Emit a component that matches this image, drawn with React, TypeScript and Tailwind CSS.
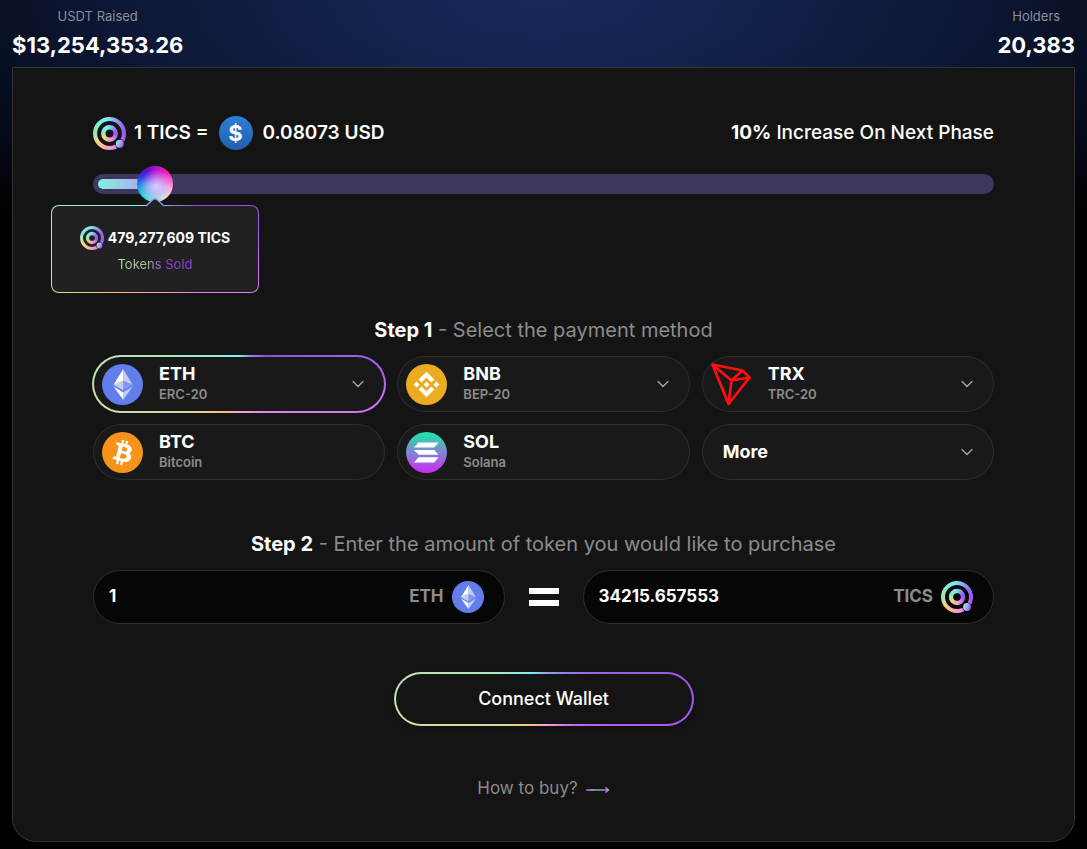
import { useId, useState } from "react";
import type { ReactNode } from "react";
import { ChevronDown } from "lucide-react";

const rainbow =
  "bg-[conic-gradient(#90e8f0_0deg,#9a8cf5_20deg,#8a50e0_45deg,#a45cf0_80deg,#c878f0_100deg,#d888ec_130deg,#f09cd8_165deg,#f8c088_215deg,#d8d8a0_245deg,#b8e4b8_280deg,#98ecd0_310deg,#7ef0f0_345deg,#90e8f0_360deg)]";

function TicsIcon({ className }: { className: string }) {
  const id = useId();
  const mask = `${id}-mask`;
  return (
    <svg viewBox="0 0 32 32" className={className} aria-hidden>
      <mask id={mask}>
        <circle cx="16" cy="16" r="14" fill="none" stroke="#fff" strokeWidth="4" />
        <circle cx="16" cy="16" r="6" fill="none" stroke="#fff" strokeWidth="4.4" />
        <circle cx="26" cy="26" r="4.6" fill="#000" />
      </mask>
      <foreignObject width="32" height="32" mask={`url(#${mask})`}>
        <div className="size-8 bg-[conic-gradient(#80d8f8_0deg,#9098f8_30deg,#9060f0_70deg,#a858f8_100deg,#c880f0_135deg,#f898d8_175deg,#fcc088_215deg,#e8d890_240deg,#a8e0b0_270deg,#78f0d8_310deg,#78f0f0_340deg,#80d8f8_360deg)]" />
      </foreignObject>
      <linearGradient id={id} x1="0" y1="0.3" x2="1" y2="0.7">
        <stop offset="0.1" stopColor="#7ee8e0" />
        <stop offset="0.45" stopColor="#a8b0f0" />
        <stop offset="0.9" stopColor="#b048f0" />
      </linearGradient>
      <circle cx="26" cy="26" r="3.9" fill={`url(#${id})`} />
    </svg>
  );
}

function EthIcon({ className }: { className: string }) {
  return (
    <svg viewBox="0 0 32 32" className={className} aria-hidden>
      <circle cx="16" cy="16" r="16" fill="#627eea" />
      <g fill="#fff">
        <path fillOpacity=".602" d="M16.498 4v8.87l7.497 3.35z" />
        <path d="M16.498 4L9 16.22l7.498-3.35z" />
        <path fillOpacity=".602" d="M16.498 21.968v6.027L24 17.616z" />
        <path d="M16.498 27.995v-6.028L9 17.616z" />
        <path fillOpacity=".2" d="M16.498 20.573l7.497-4.353-7.497-3.348z" />
        <path fillOpacity=".602" d="M9 16.22l7.498 4.353v-7.701z" />
      </g>
    </svg>
  );
}

function BtcIcon({ className }: { className: string }) {
  return (
    <svg viewBox="0 0 32 32" className={className} aria-hidden>
      <circle cx="16" cy="16" r="16" fill="#f7931a" />
      <path
        fill="#fff"
        d="M23.189 14.02c.314-2.096-1.283-3.223-3.465-3.975l.708-2.84-1.728-.43-.69 2.765c-.454-.114-.92-.22-1.385-.326l.695-2.783L15.596 6l-.708 2.839c-.376-.086-.746-.17-1.104-.26l.002-.009-2.384-.595-.46 1.846s1.283.294 1.256.312c.7.175.826.638.805 1.006l-.806 3.235c.048.012.11.03.18.057l-.183-.045-1.13 4.532c-.086.212-.303.531-.793.41.018.025-1.256-.313-1.256-.313l-.858 1.978 2.25.561c.418.105.828.215 1.231.318l-.715 2.872 1.727.43.708-2.84c.472.127.93.245 1.378.357l-.706 2.828 1.728.43.715-2.866c2.948.558 5.164.333 6.097-2.333.752-2.146-.037-3.385-1.588-4.192 1.13-.26 1.98-1.003 2.207-2.538zm-3.95 5.538c-.533 2.147-4.148.986-5.32.695l.95-3.805c1.172.293 4.929.872 4.37 3.11zm.535-5.569c-.487 1.953-3.495.96-4.47.717l.86-3.45c.975.243 4.118.696 3.61 2.733z"
      />
    </svg>
  );
}

function BnbIcon({ className }: { className: string }) {
  return (
    <svg viewBox="0 0 32 32" className={className} aria-hidden>
      <circle cx="16" cy="16" r="16" fill="#ebac22" />
      <path
        fill="#fff"
        d="M12.116 14.404L16 10.52l3.886 3.886 2.26-2.26L16 6l-6.144 6.144 2.26 2.26zM6 16l2.26-2.26L10.52 16l-2.26 2.26L6 16zm6.116 1.596L16 21.48l3.886-3.886 2.26 2.259L16 26l-6.144-6.144-.003-.003 2.263-2.257zM21.48 16l2.26-2.26L26 16l-2.26 2.26L21.48 16zm-3.188-.002L16 18.294 13.705 16 16 13.706z"
      />
    </svg>
  );
}

function SolIcon({ className }: { className: string }) {
  const id = useId();
  return (
    <svg viewBox="0 0 32 32" className={className} aria-hidden>
      <linearGradient id={id} x1="0" y1="0" x2="0" y2="1">
        <stop offset="0.05" stopColor="#22e2aa" />
        <stop offset="0.5" stopColor="#8085d0" />
        <stop offset="0.95" stopColor="#c832f4" />
      </linearGradient>
      <circle cx="16" cy="16" r="16" fill={`url(#${id})`} />
      <path fill="#fff" d="M9.8 8.2H25.4L22 12H6.2zM6.2 14H22L25.4 17.800H9.800zM9.800 19.800H25.400L22 23.800H6.200z" />
    </svg>
  );
}

function TrxIcon({ className }: { className: string }) {
  return (
    <svg viewBox="0 0 41 43" className={className} aria-hidden>
      <g fill="none" stroke="#ff0f0f" strokeWidth="2.7" strokeLinejoin="round">
        <path d="M1.500 1.500L31.500 7.500L38.500 14.500L17.500 41z" />
        <path d="M1.500 1.500L20.500 17.500L38.500 14.500M20.500 17.500L17.500 41M20.500 17.500L31.500 7.500" />
      </g>
    </svg>
  );
}

function ArrowIcon() {
  const id = useId();
  return (
    <svg viewBox="0 0 24 10" className="mt-1 h-2.5 w-6" aria-hidden>
      <linearGradient id={id} gradientUnits="userSpaceOnUse" x1="0" y1="0" x2="24" y2="0">
        <stop offset="0" stopColor="#a855f7" />
        <stop offset="0.25" stopColor="#f0a0c0" />
        <stop offset="0.4" stopColor="#70b8b0" />
        <stop offset="0.65" stopColor="#a8a880" />
        <stop offset="0.8" stopColor="#a060f0" />
        <stop offset="1" stopColor="#e0a0ff" />
      </linearGradient>
      <path d="M0 4.200h19.500V1.500L23.500 5l-4 3.500V5.800H0z" fill={`url(#${id})`} />
    </svg>
  );
}

type Method = {
  name: string;
  network?: string;
  icon?: ReactNode;
  hasMenu?: boolean;
};

const methods: Method[] = [
  { name: "ETH", network: "ERC-20", icon: <EthIcon className="size-[41px]" />, hasMenu: true },
  { name: "BNB", network: "BEP-20", icon: <BnbIcon className="size-[41px]" />, hasMenu: true },
  { name: "TRX", network: "TRC-20", icon: <TrxIcon className="h-[43px] w-[41px]" />, hasMenu: true },
  { name: "BTC", network: "Bitcoin", icon: <BtcIcon className="size-[41px]" /> },
  { name: "SOL", network: "Solana", icon: <SolIcon className="size-[41px]" /> },
  { name: "More", hasMenu: true },
];

function MethodButton({ method, active, onSelect }: { method: Method; active: boolean; onSelect: () => void }) {
  return (
    <button
      type="button"
      aria-pressed={active}
      onClick={onSelect}
      className={`rounded-full text-left ${active ? `${rainbow} -m-px h-[58px] p-0.5` : "h-14 bg-[#2e2e2e] p-px"}`}
    >
      <span className="flex h-full items-center rounded-full bg-[#191919] pr-4 pl-2">
        {method.icon}
        <span className={`flex flex-1 flex-col ${method.icon ? "ml-4" : "ml-3"}`}>
          <span className="text-lg leading-5 font-bold text-white">{method.name}</span>
          {method.network && <span className="text-[13px] leading-5 font-semibold text-[#8c8c8c]">{method.network}</span>}
        </span>
        {method.hasMenu && <ChevronDown className="size-5 text-[#a8a8a8]" strokeWidth={1.5} aria-hidden />}
      </span>
    </button>
  );
}

function AmountField({ label, unit, icon, defaultValue }: { label: string; unit: string; icon: ReactNode; defaultValue: string }) {
  return (
    <label className="flex h-[54px] min-w-0 flex-1 items-center gap-2 rounded-full border border-[#2e2e2e] bg-[#060606] pr-5 pl-[15px]">
      <input
        aria-label={label}
        defaultValue={defaultValue}
        inputMode="decimal"
        className="min-w-0 flex-1 bg-transparent text-[17px] font-bold text-white outline-none"
      />
      <span className="text-[17px] font-bold text-[#8c8c8c]">{unit}</span>
      {icon}
    </label>
  );
}

function SaleProgress() {
  const [sold, setSold] = useState(5.08);
  return (
    <div className="relative mt-4 flex h-9 items-center">
      <div className="h-5 w-full rounded-full bg-[#3f375c] p-[5px]">
        <div
          className="h-2.5 min-w-5 rounded-full bg-linear-to-r from-[#7ff0e0] to-[#b09cf0]"
          style={{ width: `${sold + 1}%` }}
        />
      </div>
      <input
        type="range"
        aria-label="Tokens sold"
        min={0}
        max={100}
        step="any"
        value={sold}
        onChange={(e) => setSold(Number(e.target.value))}
        className="absolute inset-0 h-9 w-full appearance-none bg-transparent [&::-webkit-slider-thumb]:size-9 [&::-webkit-slider-thumb]:appearance-none [&::-webkit-slider-thumb]:rounded-full [&::-webkit-slider-thumb]:bg-[radial-gradient(circle_at_52%_58%,#d8c8ff_0%,#c8b0ffcc_25%,transparent_62%),conic-gradient(#b010c8_0deg,#f020c0_45deg,#ff60c8_80deg,#f8c8d0_115deg,#d8f8c8_150deg,#70f0c8_185deg,#18d8e0_225deg,#1090e8_265deg,#3030d8_300deg,#6010d0_330deg,#b010c8_360deg)]"
      />
      <div className={`absolute top-[39px] -left-[42px] w-52 rounded-lg p-px ${rainbow}`}>
        <svg viewBox="0 0 20 9" className="absolute -top-[7px] left-[94px] h-[9px] w-5" aria-hidden>
          <path d="M1 8L8 1.500Q10 0 12 1.500L19 8V9H1z" fill="#212121" />
          <path d="M1 8L8 1.500Q10 0 12 1.500L19 8" fill="none" stroke="#8f9cea" strokeWidth="1.400" />
        </svg>
        <div className="flex h-[86px] flex-col items-center gap-1.5 rounded-[7px] bg-[#212121] pt-5">
          <div className="flex items-center gap-1">
            <TicsIcon className="size-6" />
            <span className="text-sm font-bold text-white">479,277,609 TICS</span>
          </div>
          <span className="bg-linear-to-r from-[#b0e0b0] via-[#a8b898] via-40% to-[#9040e0] to-60% bg-clip-text text-[13px] leading-4 text-transparent">
            Tokens Sold
          </span>
        </div>
      </div>
    </div>
  );
}

export default function App() {
  const [selected, setSelected] = useState("ETH");

  return (
    <div className="min-h-screen bg-black bg-[radial-gradient(ellipse_62%_260px_at_50%_0,#17285a_0%,#13224c_30%,#0e1938_60%,#080f22_85%,#000_115%)] bg-no-repeat px-3 pb-[7px] font-[Inter,sans-serif]">
      <header className="flex h-[67px] justify-between pt-1.5 text-center">
        <div>
          <p className="text-[13px] leading-5 text-[#8b8e98]">USDT Raised</p>
          <p className="mt-[3px] text-[22px] leading-8 font-bold text-white">$13,254,353.26</p>
        </div>
        <div>
          <p className="text-[13px] leading-5 text-[#8b8e98]">Holders</p>
          <p className="mt-[3px] text-[22px] leading-8 font-bold text-white">20,383</p>
        </div>
      </header>

      <main className="rounded-b-3xl border border-[#343436] bg-[#141414] px-20 pt-12 pb-[39px]">
        <div className="flex h-[34px] items-center justify-between text-white">
          <p className="flex items-center gap-2 text-[19px] font-semibold">
            <TicsIcon className="size-[33px]" />
            <span>1 TICS =</span>
            <span className="ml-0.5 flex size-[34px] items-center justify-center rounded-full bg-linear-to-b from-[#2d7fd6] to-[#2060ae] text-[22px] font-bold">
              $
            </span>
            <span className="ml-0.5">0.08073 USD</span>
          </p>
          <p className="text-[19px] leading-7 font-medium">
            <strong className="font-bold">10%</strong> Increase On Next Phase
          </p>
        </div>

        <SaleProgress />

        <section className="mt-[114px]">
          <h2 className="text-center text-xl leading-7 text-[#8c8c8c]">
            <strong className="font-bold text-white">Step 1</strong> - Select the payment method
          </h2>
          <div className="mt-3 grid grid-cols-3 gap-3">
            {methods.map((method) => (
              <MethodButton
                key={method.name}
                method={method}
                active={method.name === selected}
                onSelect={() => setSelected(method.name)}
              />
            ))}
          </div>
        </section>

        <section className="mt-[50px]">
          <h2 className="text-center text-xl leading-7 text-[#8c8c8c]">
            <strong className="font-bold text-white">Step 2</strong> - Enter the amount of token you would like to purchase
          </h2>
          <div className="mt-3 flex items-center gap-6">
            <AmountField label="ETH amount" unit="ETH" icon={<EthIcon className="size-8" />} defaultValue="1" />
            <div className="flex w-[30px] flex-col gap-1.5" aria-hidden>
              <span className="h-1.5 bg-white" />
              <span className="h-1.5 bg-white" />
            </div>
            <AmountField label="TICS amount" unit="TICS" icon={<TicsIcon className="size-8" />} defaultValue="34215.657553" />
          </div>
        </section>

        <div className="mt-12 flex flex-col items-center gap-12">
          <button
            type="button"
            className="h-[54px] w-[300px] rounded-full bg-[conic-gradient(#90b0f0_0deg,#9878e8_45deg,#9858e8_80deg,#a858f0_100deg,#b868e8_125deg,#e090d8_155deg,#f8a0c8_175deg,#f8c080_205deg,#d8d898_240deg,#c8e0b0_270deg,#b0e8c0_295deg,#80f0e8_325deg,#78e8f8_340deg,#90b0f0_360deg)] p-0.5 shadow-md"
          >
            <span className="flex h-full items-center justify-center rounded-full bg-[#141414] text-lg font-medium text-white">
              Connect Wallet
            </span>
          </button>
          <a href="#how-to-buy" className="flex items-center gap-2 text-[17px] leading-7 text-[#8c8c8c]">
            How to buy?
            <ArrowIcon />
          </a>
        </div>
      </main>
    </div>
  );
}
